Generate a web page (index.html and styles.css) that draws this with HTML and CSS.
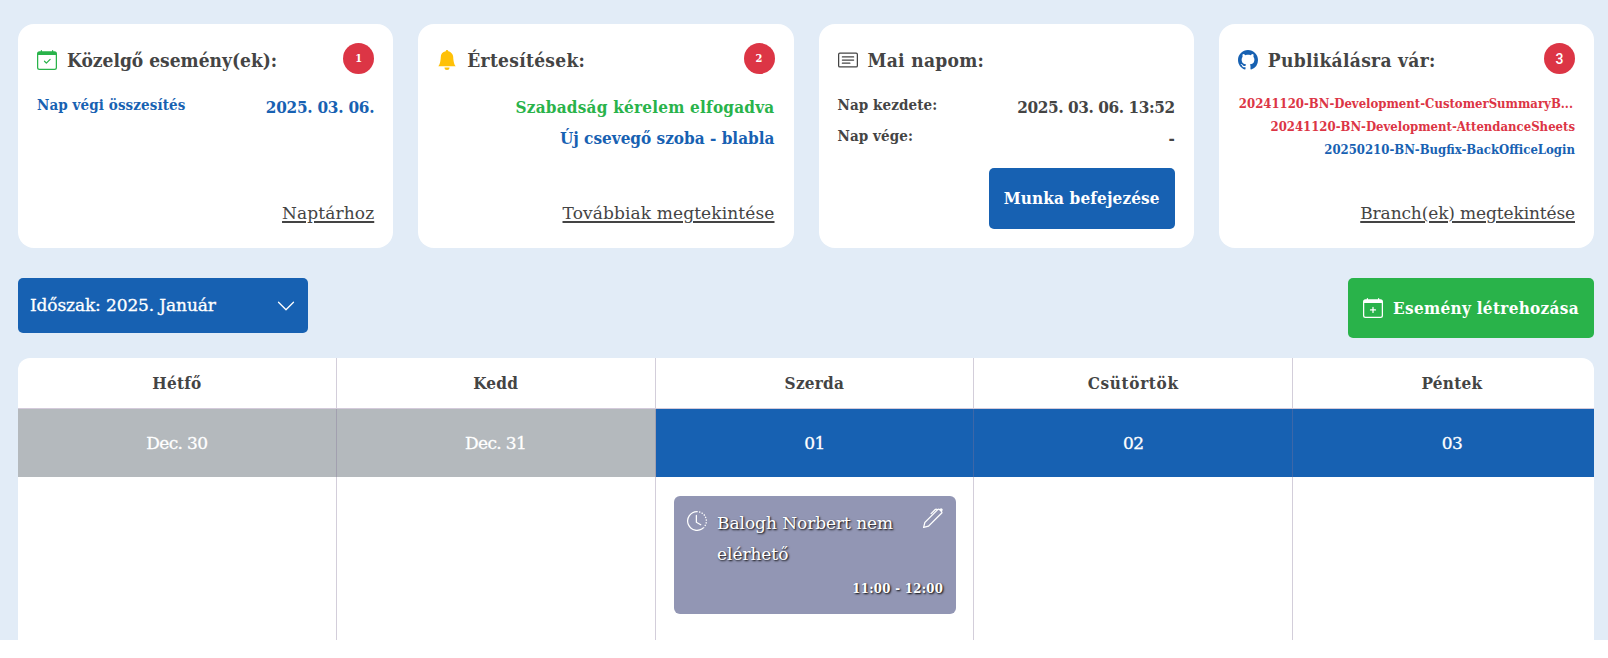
FILE: index.html
```
<!DOCTYPE html>
<html lang="hu">
<head>
<meta charset="utf-8">
<title>Naptár</title>
<link rel="stylesheet" href="styles.css">
</head>
<body>
<div class="dashboard">
  <section class="cards">
    <article class="card">
      <header class="card-head">
        <svg class="icon green" viewBox="0 0 16 16"><path d="M10.854 7.146a.5.5 0 0 1 0 .708l-3 3a.5.5 0 0 1-.708 0l-1.500-1.500a.5.5 0 1 1 .708-.708L7.500 9.793l2.646-2.647a.5.5 0 0 1 .708 0z"/><path d="M3.500 0a.5.5 0 0 1 .5.5V1h8V.5a.5.5 0 0 1 1 0V1h1a2 2 0 0 1 2 2v11a2 2 0 0 1-2 2H2a2 2 0 0 1-2-2V3a2 2 0 0 1 2-2h1V.5a.5.5 0 0 1 .5-.5zM1 4v10a1 1 0 0 0 1 1h12a1 1 0 0 0 1-1V4H1z"/></svg>
        <h2 class="tight">Közelgő esemény(ek):</h2>
        <span class="badge">1</span>
      </header>
      <div class="row blue"><span class="label">Nap végi összesítés</span><span class="value short-date">2025. 03. 06.</span></div>
      <a class="more">Naptárhoz</a>
    </article>
    <article class="card">
      <header class="card-head">
        <svg class="icon amber" viewBox="0 0 16 16"><path d="M8 16a2 2 0 0 0 2-2H6a2 2 0 0 0 2 2zm.995-14.901a1 1 0 1 0-1.990 0A5.002 5.002 0 0 0 3 6c0 1.098-.5 6-2 7h14c-1.500-1-2-5.902-2-7 0-2.420-1.720-4.440-4.005-4.901z"/></svg>
        <h2>Értesítések:</h2>
        <span class="badge">2</span>
      </header>
      <div class="row green"><span class="value approved">Szabadság kérelem elfogadva</span></div>
      <div class="row blue"><span class="value">Új csevegő szoba - blabla</span></div>
      <a class="more">Továbbiak megtekintése</a>
    </article>
    <article class="card">
      <header class="card-head">
        <svg class="icon" viewBox="0 0 16 16"><path d="M14.500 3a.5.5 0 0 1 .5.5v9a.5.5 0 0 1-.5.5h-13a.5.5 0 0 1-.5-.5v-9a.5.5 0 0 1 .5-.5h13zm-13-1A1.500 1.500 0 0 0 0 3.500v9A1.500 1.500 0 0 0 1.500 14h13a1.500 1.500 0 0 0 1.500-1.500v-9A1.500 1.500 0 0 0 14.500 2h-13z"/><path d="M3 5.500a.5.5 0 0 1 .5-.5h9a.5.5 0 0 1 0 1h-9a.5.5 0 0 1-.5-.5zM3 8a.5.5 0 0 1 .5-.5h9a.5.5 0 0 1 0 1h-9A.5.5 0 0 1 3 8zm0 2.500a.5.5 0 0 1 .5-.5h6a.5.5 0 0 1 0 1h-6a.5.5 0 0 1-.5-.5z"/></svg>
        <h2>Mai napom:</h2>
      </header>
      <div class="row"><span class="label">Nap kezdete:</span><span class="value long-date">2025. 03. 06. 13:52</span></div>
      <div class="row"><span class="label">Nap vége:</span><span class="value">-</span></div>
      <button class="btn finish">Munka befejezése</button>
    </article>
    <article class="card">
      <header class="card-head">
        <svg class="icon blue" viewBox="0 0 16 16"><path d="M8 0C3.580 0 0 3.580 0 8c0 3.540 2.290 6.530 5.470 7.590.4.070.55-.17.55-.38 0-.19-.01-.82-.01-1.490-2.010.37-2.530-.49-2.690-.94-.09-.23-.48-.94-.82-1.130-.28-.15-.68-.52-.01-.53.63-.01 1.080.58 1.230.82.72 1.210 1.870.87 2.330.66.07-.52.28-.87.51-1.070-1.780-.2-3.640-.89-3.640-3.950 0-.87.31-1.590.82-2.150-.08-.2-.36-1.020.08-2.120 0 0 .67-.21 2.200.82.64-.18 1.320-.27 2-.27.68 0 1.360.09 2 .27 1.530-1.040 2.200-.82 2.200-.82.44 1.100.16 1.920.08 2.120.51.56.82 1.270.82 2.150 0 3.070-1.870 3.750-3.650 3.950.29.25.54.73.54 1.480 0 1.070-.01 1.930-.01 2.200 0 .21.15.46.55.38A8.012 8.012 0 0 0 16 8c0-4.420-3.580-8-8-8z"/></svg>
        <h2>Publikálásra vár:</h2>
        <span class="badge sans">3</span>
      </header>
      <div class="branches">
        <span class="red clipped">20241120-BN-Development-CustomerSummaryB...</span>
        <span class="red">20241120-BN-Development-AttendanceSheets</span>
        <span class="blue">20250210-BN-Bugfix-BackOfficeLogin</span>
      </div>
      <a class="more branch-link">Branch(ek) megtekintése</a>
    </article>
  </section>

  <section class="toolbar">
    <div class="period">
      <span>Időszak: 2025. Január</span>
      <svg viewBox="0 0 16 16"><path d="M1.646 4.646a.5.5 0 0 1 .708 0L8 10.293l5.646-5.647a.5.5 0 0 1 .708.708l-6 6a.5.5 0 0 1-.708 0l-6-6a.5.5 0 0 1 0-.708z"/></svg>
    </div>
    <button class="btn create">
      <svg class="icon" viewBox="0 0 16 16"><path d="M8 7a.5.5 0 0 1 .5.5V9H10a.5.5 0 0 1 0 1H8.500v1.500a.5.5 0 0 1-1 0V10H6a.5.5 0 0 1 0-1h1.500V7.500A.5.5 0 0 1 8 7z"/><path d="M3.500 0a.5.5 0 0 1 .5.5V1h8V.5a.5.5 0 0 1 1 0V1h1a2 2 0 0 1 2 2v11a2 2 0 0 1-2 2H2a2 2 0 0 1-2-2V3a2 2 0 0 1 2-2h1V.5a.5.5 0 0 1 .5-.5zM1 4v10a1 1 0 0 0 1 1h12a1 1 0 0 0 1-1V4H1z"/></svg>
      <span>Esemény létrehozása</span>
    </button>
  </section>

  <section class="calendar">
    <div class="column">
      <div class="weekday">Hétfő</div>
      <div class="date past">Dec. 30</div>
      <div class="slots"></div>
    </div>
    <div class="column">
      <div class="weekday">Kedd</div>
      <div class="date past">Dec. 31</div>
      <div class="slots"></div>
    </div>
    <div class="column">
      <div class="weekday">Szerda</div>
      <div class="date">01</div>
      <div class="slots">
        <div class="event">
          <div class="event-main">
            <svg class="icon" viewBox="0 0 16 16"><path d="M8.515 1.019A7 7 0 0 0 8 1V0a8 8 0 0 1 .589.022l-.074.997zm2.004.45a7.003 7.003 0 0 0-.985-.299l.219-.976c.383.086.76.2 1.126.342l-.36.933zm1.370.710a7.010 7.010 0 0 0-.439-.27l.493-.87a8.025 8.025 0 0 1 .979.654l-.615.789a6.996 6.996 0 0 0-.418-.302zm1.834 1.790a6.990 6.990 0 0 0-.653-.796l.724-.69c.27.285.52.590.747.910l-.818.576zm.744 1.352a7.080 7.080 0 0 0-.214-.468l.893-.45a7.976 7.976 0 0 1 .45 1.088l-.95.313a7.023 7.023 0 0 0-.179-.483zm.53 2.507a6.991 6.991 0 0 0-.1-1.025l.985-.17c.067.386.106.778.116 1.170l-1 .025zm-.131 1.538c.033-.17.060-.339.081-.51l.993.123a7.957 7.957 0 0 1-.23 1.155l-.964-.267c.046-.165.086-.332.12-.501zm-.952 2.379c.184-.29.346-.594.486-.908l.914.405c-.16.36-.345.706-.555 1.038l-.845-.535zm-.964 1.205c.122-.122.239-.248.350-.378l.758.653a8.073 8.073 0 0 1-.401.432l-.707-.707z"/><path d="M8 1a7 7 0 1 0 4.950 11.950l.707.707A8.001 8.001 0 1 1 8 0v1z"/><path d="M7.500 3a.5.5 0 0 1 .5.5v5.210l3.248 1.856a.5.5 0 0 1-.496.868l-3.500-2A.5.5 0 0 1 7 9V3.500a.5.5 0 0 1 .5-.5z"/></svg>
            <p>Balogh Norbert nem elérhető</p>
            <svg class="icon pen" viewBox="0 0 16 16"><path d="m13.498.795.149-.149a1.207 1.207 0 1 1 1.707 1.708l-.149.148a1.500 1.500 0 0 1-.059 2.059L4.854 14.854a.5.5 0 0 1-.233.131l-4 1a.5.5 0 0 1-.606-.606l1-4a.5.5 0 0 1 .131-.232l9.642-9.642a.5.5 0 0 0-.642.056L6.854 4.854a.5.5 0 1 1-.708-.708L9.440.854A1.500 1.500 0 0 1 11.500.796a1.500 1.500 0 0 1 1.998-.001zm-.644.766a.5.5 0 0 0-.707 0L1.950 11.756l-.764 3.057 3.057-.764L14.440 3.854a.5.5 0 0 0 0-.708l-1.585-1.585z"/></svg>
          </div>
          <div class="time">11:00 - 12:00</div>
        </div>
      </div>
    </div>
    <div class="column">
      <div class="weekday wide">Csütörtök</div>
      <div class="date">02</div>
      <div class="slots"></div>
    </div>
    <div class="column">
      <div class="weekday">Péntek</div>
      <div class="date">03</div>
      <div class="slots"></div>
    </div>
  </section>
</div>
</body>
</html>
```
FILE: styles.css
```
* { box-sizing: border-box; }

body {
  margin: 0;
  background: #fff;
  color: #444;
  font-family: "DejaVu Serif Condensed", "DejaVu Serif", serif;
  font-size: 17px;
  line-height: 31px;
}

h2, p { margin: 0; }

.dashboard {
  height: 640px;
  padding: 24px 14px 0 18px;
  background: #e2ecf7;
  overflow: hidden;
}

.icon { width: 20px; height: 20px; flex: none; fill: currentColor; }
.green { color: #29b34a; }
.blue { color: #1761b2; }
.amber { color: #ffc107; }
.red { color: #dc3545; }

.more, .period, .date, .event-main p { font-family: "DejaVu Serif", serif; }

.cards {
  display: grid;
  grid-template-columns: repeat(4, minmax(0, 1fr));
  gap: 25px;
}

.card {
  display: flex;
  flex-direction: column;
  height: 224px;
  padding: 19px;
  border-radius: 16px;
  background: #fff;
}

.card-head {
  display: flex;
  align-items: center;
  height: 34px;
  margin-bottom: 15px;
}

.card-head h2 {
  flex: 1;
  margin-left: 10px;
  font-size: 19px;
  line-height: 34px;
  letter-spacing: 0.3px;
  white-space: nowrap;
}

.card-head .tight { letter-spacing: 0; }

.badge {
  width: 31px;
  height: 31px;
  margin-bottom: 3px;
  border-radius: 50%;
  background: #dc3545;
  color: #fff;
  font-size: 11px;
  font-weight: 600;
  line-height: 31px;
  text-align: center;
}

.badge.sans {
  font-family: Roboto, sans-serif;
  font-size: 14px;
  font-weight: 500;
  line-height: 32px;
}

.row {
  display: flex;
  height: 31px;
  font-weight: 700;
  white-space: nowrap;
}

.label { font-size: 15px; line-height: 27px; letter-spacing: 0.1px; }
.value { margin-left: auto; }
.approved { letter-spacing: 0.22px; }
.short-date { letter-spacing: -0.25px; }
.long-date { letter-spacing: -0.41px; }

.branches {
  display: flex;
  flex-direction: column;
  align-items: flex-end;
  font-size: 13px;
  font-weight: 700;
  line-height: 23px;
  white-space: nowrap;
}

.clipped { padding-right: 2px; }

.more {
  align-self: flex-end;
  margin-top: auto;
  letter-spacing: 0.12px;
  text-decoration: underline;
  text-decoration-thickness: 2px;
  text-underline-offset: 2px;
}

.branch-link { letter-spacing: -0.12px; }

.btn {
  display: flex;
  align-items: center;
  justify-content: center;
  padding: 0;
  border: 0;
  border-radius: 5px;
  color: #fff;
  font: inherit;
  font-weight: 700;
  white-space: nowrap;
}

.finish {
  align-self: flex-end;
  width: 186px;
  height: 61px;
  margin-top: auto;
  background: #1761b2;
  letter-spacing: 0.14px;
}

.toolbar {
  display: flex;
  align-items: flex-start;
  justify-content: space-between;
  margin: 30px 0 20px;
}

.period {
  display: flex;
  align-items: center;
  justify-content: space-between;
  width: 290px;
  height: 55px;
  padding: 0 12px;
  border-radius: 5px;
  background: #1761b2;
  color: #fff;
  letter-spacing: -0.12px;
  white-space: nowrap;
  -webkit-text-stroke: 0.3px currentColor;
}

.period svg { width: 20px; height: 20px; fill: currentColor; -webkit-text-stroke: 0; }

.create {
  gap: 10px;
  width: 246px;
  height: 60px;
  background: #29b34a;
  letter-spacing: 0.31px;
}

.calendar {
  display: grid;
  grid-template-columns: repeat(5, 318.77px);
  height: 290px;
  border-radius: 12px 12px 0 0;
  background: #fff;
  overflow: hidden;
}

.column { display: flex; flex-direction: column; }

.weekday, .date, .slots { border-right: 1px solid rgba(130, 115, 150, 0.35); }

.weekday {
  height: 51px;
  border-bottom: 1px solid rgba(130, 105, 150, 0.35);
  font-weight: 700;
  letter-spacing: 0.25px;
  line-height: 51px;
  text-align: center;
}

.weekday.wide { letter-spacing: 0.65px; }

.date {
  height: 68px;
  background: #1761b2;
  color: #fff;
  letter-spacing: -0.65px;
  line-height: 69px;
  text-align: center;
  -webkit-text-stroke: 0.3px currentColor;
}

.date.past { background: #b4b9bd; }

.slots { flex: 1; }

.event {
  height: 118px;
  margin: 19px 17px 0 18.5px;
  padding: 12px 13px;
  border-radius: 6px;
  background: #9296b4;
  color: #fff;
  text-shadow: 1px 1px 2px #000;
}

.event-main { display: flex; align-items: flex-start; }
.event-main .icon { margin-top: 3px; }
.event-main .pen { margin-top: 0; }
.event-main p { flex: 1; margin-left: 10px; letter-spacing: -0.06px; }

.time {
  margin-top: 3px;
  font-size: 13px;
  font-weight: 700;
  letter-spacing: 0.33px;
  text-align: right;
}
```
